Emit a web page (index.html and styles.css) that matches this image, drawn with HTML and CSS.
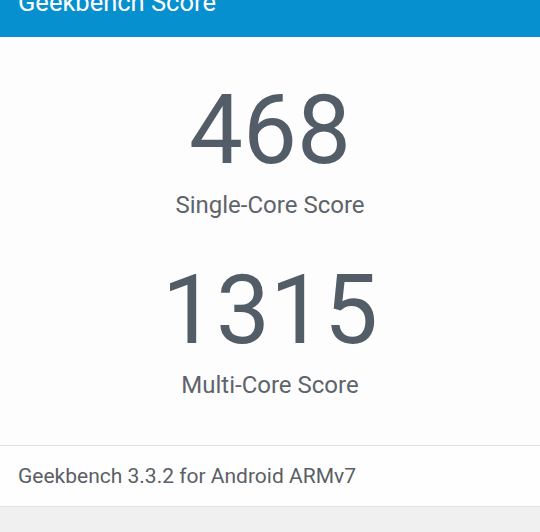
FILE: index.html
```html
<!DOCTYPE html>
<html>
<head>
<meta charset="utf-8">
<link rel="stylesheet" href="styles.css">
</head>
<body>
<div class="appbar"><div class="title">Geekbench Score</div></div>
<div class="scores">
  <div class="score">
    <div class="value">468</div>
    <div class="label">Single-Core Score</div>
  </div>
  <div class="score">
    <div class="value">1315</div>
    <div class="label">Multi-Core Score</div>
  </div>
</div>
<div class="version">Geekbench 3.3.2 for Android ARMv7</div>
<div class="rest"></div>
</body>
</html>
```
FILE: styles.css
```css
html, body {
  margin: 0;
  padding: 0;
  height: 100%;
}
body {
  font-family: Roboto, "Noto Sans", sans-serif;
  background: #f0f0f0;
  display: flex;
  flex-direction: column;
  overflow: hidden;
}
.appbar {
  background: #0790d0;
  height: 37px;
  overflow: hidden;
  flex: none;
}
.title {
  color: #ffffff;
  font-size: 25.5px;
  line-height: 26px;
  padding-left: 18px;
  margin-top: -11px;
}
.scores {
  background: #fdfdfd;
  height: 409px;
  border-bottom: 1px solid #dedede;
  display: flex;
  flex-direction: column;
  align-items: center;
  padding-top: 38px;
  box-sizing: border-box;
  flex: none;
  gap: 35px;
}
.score {
  display: flex;
  flex-direction: column;
  align-items: center;
}
.value {
  font-size: 96px;
  line-height: 110px;
  color: #535d68;
}
.label {
  margin-top: 5px;
  font-size: 24px;
  line-height: 30px;
  color: #5e646a;
}
.version {
  background: #fefefe;
  height: 60px;
  line-height: 60px;
  padding-left: 18px;
  font-size: 21px;
  color: #5a5f66;
  border-bottom: 1px solid #e2e2e2;
  flex: none;
}
.rest {
  flex: 1;
  background: #f0f0f0;
}
```
